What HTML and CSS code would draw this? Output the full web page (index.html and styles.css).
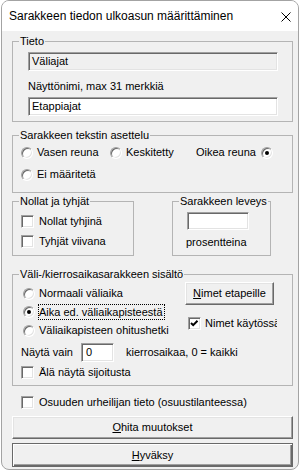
FILE: index.html
```html
<!DOCTYPE html>
<html>
  <head>
    <meta charset="utf-8">
    <title>Sarakkeen tiedon ulkoasun määrittäminen</title>
    <link rel="stylesheet" href="styles.css">
  </head>
  <body>
    <div class="window">
      <div class="titlebar">
        <span class="title">Sarakkeen tiedon ulkoasun määrittäminen</span>
        <svg class="close" width="10" height="10" viewBox="0 0 10 10">
          <path d="M0.5 0.5L9.5 9.5M9.5 0.5L0.5 9.5" stroke="#000" stroke-width="1" />
        </svg>
      </div>
      <div class="client">
        <fieldset class="group tieto">
          <legend>Tieto</legend>
          <div class="group-body">
            <div class="edit disabled">Väliajat</div>
            <div class="caption">Näyttönimi, max 31 merkkiä</div>
            <div class="edit">Etappiajat</div>
          </div>
        </fieldset>

        <fieldset class="group align">
          <legend>Sarakkeen tekstin asettelu</legend>
          <div class="group-body">
            <div class="align-row">
              <span class="opt opt-left"><span class="radio"></span>Vasen reuna</span>
              <span class="opt opt-center"><span class="radio"></span>Keskitetty</span>
              <span class="opt opt-right">Oikea reuna<span class="radio checked"></span></span>
            </div>
            <div class="align-row second">
              <span class="opt"><span class="radio"></span>Ei määritetä</span>
            </div>
          </div>
        </fieldset>

        <div class="pair">
          <fieldset class="group zeros">
            <legend>Nollat ja tyhjät</legend>
            <div class="group-body">
              <div class="opt check-row"><span class="check"></span>Nollat tyhjinä</div>
              <div class="opt check-row second"><span class="check"></span>Tyhjät viivana</div>
            </div>
          </fieldset>
          <fieldset class="group width">
            <legend>Sarakkeen leveys</legend>
            <div class="group-body">
              <div class="edit small"></div>
              <div class="caption percent">prosentteina</div>
            </div>
          </fieldset>
        </div>

        <fieldset class="group split">
          <legend>Väli-/kierrosaikasarakkeen sisältö</legend>
          <div class="group-body">
            <div class="split-top">
              <div class="split-radios">
                <div class="opt"><span class="radio"></span>Normaali väliaika</div>
                <div class="opt second"><span class="radio checked"></span><span class="focus">Aika ed. väliaikapisteestä</span></div>
                <div class="opt third"><span class="radio"></span>Väliaikapisteen ohitushetki</div>
              </div>
              <div class="split-side">
                <div class="button names"><span><u>N</u>imet etapeille</span></div>
                <div class="opt names-check"><span class="check checked">
                  <svg width="9" height="9" viewBox="0 0 9 9"><path d="M1 4L3.2 6.2L7.5 1.8" fill="none" stroke="#000" stroke-width="2" /></svg>
                </span>Nimet käytössä</div>
              </div>
            </div>
            <div class="show-row">
              <span class="show-label">Näytä vain</span>
              <div class="edit laps">0</div>
              <span class="show-note">kierrosaikaa, 0 = kaikki</span>
            </div>
            <div class="opt check-row no-rank"><span class="check"></span>Älä näytä sijoitusta</div>
          </div>
        </fieldset>

        <div class="opt check-row leg"><span class="check"></span>Osuuden urheilijan tieto (osuustilanteessa)</div>

        <div class="button wide cancel"><span><u>O</u>hita muutokset</span></div>
        <div class="button wide default"><span><u>H</u>yväksy</span></div>
      </div>
    </div>
  </body>
</html>
```

FILE: styles.css
```css
/* Windows dialog look */
* {
  box-sizing: border-box;
}
body {
  margin: 0;
  background: #fff;
  font-family: "Liberation Sans", Arial, sans-serif;
  font-size: 11px;
  line-height: 13px;
  color: #000;
}
.window {
  width: 298px;
  height: 470px;
  margin-left: 1px;
  border: 1px solid #a3a3a3;
  border-radius: 8px;
  background: #f0f0f0;
  overflow: hidden;
}
.titlebar {
  height: 30px;
  background: #fff;
  display: flex;
  align-items: center;
  justify-content: space-between;
  padding: 1px 7px 0 7px;
}
.title {
  font-size: 12px;
  color: #000;
}
.close {
  display: block;
}
.client {
  padding: 4px 0 0 10px;
}

/* group boxes */
.group {
  margin: 0;
  padding: 0;
  border: 1px solid #b4b4b4;
  min-width: 0;
  width: 281px;
}
.group legend {
  margin-left: 6px;
  padding: 0 1px;
  line-height: 13px;
  white-space: nowrap;
}
.tieto .group-body {
  padding: 4px 0 5px 15px;
}
.align {
  margin-top: 7px;
}
.align .group-body {
  padding: 4px 0 11px 8px;
}
.pair {
  display: flex;
  align-items: flex-start;
  gap: 38px;
  margin-top: 2px;
}
.zeros {
  width: 122px;
}
.zeros .group-body {
  padding: 7px 0 7px 8px;
}
.width {
  width: 99px;
}
.width .group-body {
  padding: 4px 0 6px 14px;
}
.split {
  margin-top: 12px;
}
.split .group-body {
  padding: 0 0 6px 0;
}

/* text and edits */
.caption {
  margin-top: 9px;
}
.edit {
  width: 250px;
  height: 19px;
  margin-top: 4px;
  padding-left: 3px;
  line-height: 17px;
  background: #fff;
  border: 1px solid;
  border-color: #a0a0a0 #fff #fff #a0a0a0;
  box-shadow: inset 1px 1px #696969, inset -1px -1px #e3e3e3;
}
.tieto .edit:first-child {
  margin-top: 0;
}
.edit.disabled {
  background: #f0f0f0;
  color: #000;
}
.edit.small {
  width: 62px;
  height: 18px;
  margin-top: 0;
}
.percent {
  margin-top: 6px;
  margin-left: -1px;
}

/* radios and checks */
.opt {
  display: flex;
  align-items: center;
  height: 13px;
  white-space: nowrap;
}
.radio {
  width: 12px;
  height: 12px;
  border-radius: 50%;
  background: #fff;
  border: 1px solid;
  border-color: #a0a0a0 #fff #fff #a0a0a0;
  box-shadow: inset 1px 1px #696969, inset -1px -1px #e3e3e3;
  margin-right: 4px;
  display: flex;
  align-items: center;
  justify-content: center;
  flex: none;
}
.radio.checked::after {
  content: "";
  width: 4px;
  height: 4px;
  border-radius: 50%;
  background: #000;
}
.align-row {
  display: flex;
}
.align-row.second {
  margin-top: 9px;
}
.opt-left {
  width: 89px;
}
.opt-center {
  width: 86px;
}
.opt-right .radio {
  margin-right: 0;
  margin-left: 5px;
}
.check {
  width: 13px;
  height: 13px;
  background: #fff;
  border: 1px solid;
  border-color: #a0a0a0 #fff #fff #a0a0a0;
  box-shadow: inset 1px 1px #696969, inset -1px -1px #e3e3e3;
  margin-right: 5px;
  display: flex;
  align-items: center;
  justify-content: center;
  flex: none;
}
.check svg {
  display: block;
}
.check-row.second {
  margin-top: 7px;
}

/* split time group */
.split-top {
  display: flex;
  align-items: flex-start;
}
.split-radios {
  width: 172px;
  padding: 6px 0 0 10px;
}
.split-radios .second {
  margin-top: 5px;
}
.split-radios .third {
  margin-top: 6px;
}
.focus {
  outline: 1px dotted #000;
  outline-offset: 0;
  padding: 0 1px 0 0;
  line-height: 14px;
}
.split-side {
  padding-top: 1px;
}
.button {
  height: 23px;
  background: #f0f0f0;
  border: 1px solid;
  border-color: #fff #696969 #696969 #fff;
  box-shadow: inset -1px -1px #a0a0a0, inset 1px 1px #e3e3e3;
  display: flex;
  align-items: center;
  justify-content: center;
}
.button.names {
  width: 89px;
}
.names-check {
  margin-top: 12px;
  margin-left: 3px;
  width: 89px;
  overflow: hidden;
}
.names-check .check {
  margin-right: 4px;
}
.show-row {
  display: flex;
  align-items: center;
  margin-top: 6px;
  padding-left: 8px;
}
.show-label {
  width: 60px;
}
.edit.laps {
  width: 33px;
  margin-top: 0;
  padding-left: 4px;
}
.show-note {
  margin-left: 12px;
}
.no-rank {
  margin-top: 4px;
  margin-left: 8px;
}
.leg {
  margin-top: 10px;
  margin-left: 9px;
}

/* dialog buttons */
.button.wide {
  width: 281px;
}
.cancel {
  margin-top: 7px;
}
.default {
  margin-top: 4px;
  height: 24px;
  border: 1px solid #696969;
  box-shadow: inset 1px 1px #fff, inset -1px -1px #696969, inset -2px -2px #a0a0a0;
}
```
